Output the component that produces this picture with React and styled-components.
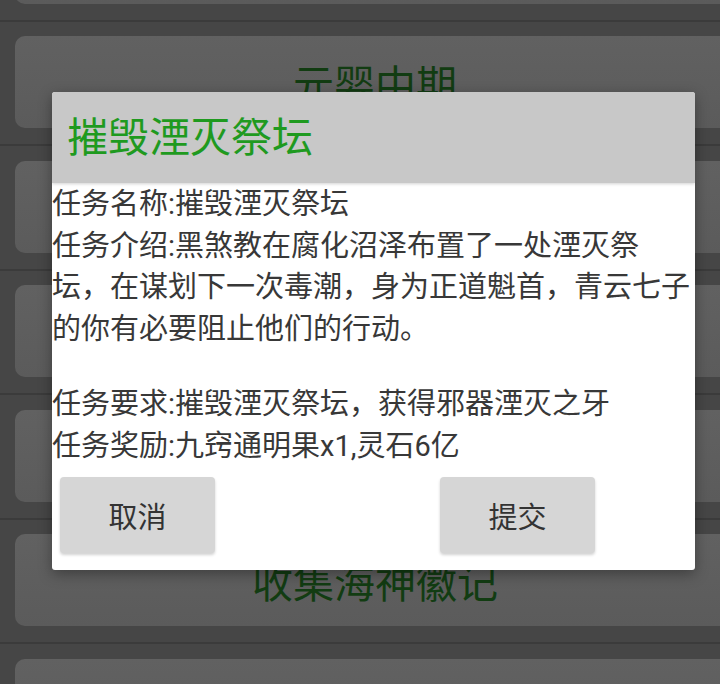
import React from "react";
import styled, { createGlobalStyle } from "styled-components";

const Global = createGlobalStyle`
  html, body {
    margin: 0;
    padding: 0;
    width: 720px;
    height: 684px;
    overflow: hidden;
    background: #464646;
    font-family: Roboto, "Noto Sans CJK SC", sans-serif;
  }
`;

const Screen = styled.div`
  position: relative;
  width: 720px;
  height: 684px;
  overflow: hidden;
  background: #464646;
`;

/* the quest list behind the dialog, scrolled part way down */
const List = styled.div`
  display: flex;
  flex-direction: column;
  margin-top: -88.5px;
`;

const Row = styled.div`
  display: flex;
  flex-direction: column;
  padding-left: 15px;
`;

const Card = styled.div`
  width: 720px;
  height: 92px;
  border-radius: 10px 0 0 10px;
  background: linear-gradient(180deg, #616161 0%, #5b5b5b 100%);
  display: flex;
  align-items: center;
  justify-content: center;
  font-size: 41px;
  color: #123c12;
  font-family: "Noto Sans CJK SC", sans-serif;
`;

const Divider = styled.div`
  margin: 16px 0 0 -15px;
  height: 2px;
  width: 735px;
  background: #3b3b3b;
  margin-bottom: 14.5px;
`;

const Scrim = styled.div`
  position: absolute;
  inset: 0;
  display: flex;
  align-items: flex-start;
  padding: 92px 0 0 52px;
`;

const Dialog = styled.div`
  width: 643px;
  height: 478px;
  background: #ffffff;
  border-radius: 3px;
  overflow: hidden;
  display: flex;
  flex-direction: column;
  box-shadow: 0 4px 14px rgba(0, 0, 0, 0.35);
`;

const TitleBar = styled.div`
  height: 91px;
  flex: none;
  background: #c8c8c8;
  display: flex;
  align-items: center;
  padding: 0 0 8px 15px;
  box-sizing: border-box;
  box-shadow: 0 1px 3px rgba(0, 0, 0, 0.18);
  position: relative;
  z-index: 1;
`;

const Title = styled.h1`
  margin: 0;
  font-weight: 400;
  font-size: 41px;
  color: #1f9a1f;
  font-family: "Noto Sans CJK SC", sans-serif;
`;

const Body = styled.div`
  display: flex;
  flex-direction: column;
  padding-top: 1px;
  flex: 1;
`;

const Para = styled.p`
  margin: 0 0 ${(p) => p.$after || 0}px 0;
  font-size: 29px;
  line-height: 41.5px;
  color: #383838;
  white-space: nowrap;
`;

const Buttons = styled.div`
  display: flex;
  gap: 225px;
  padding-left: 8px;
  margin-top: 10px;
`;

const Button = styled.button`
  width: 155px;
  height: 76px;
  border: none;
  border-radius: 4px;
  background: #d6d6d6;
  box-shadow: 0 2px 3px rgba(0, 0, 0, 0.18);
  font-family: "Noto Sans CJK SC", sans-serif;
  font-size: 29px;
  color: #333;
  padding: 0;
`;

const cards = ["", "元婴中期", "", "", "", "收集海神徽记", ""];

export default function App() {
  return (
    <>
      <Global />
      <Screen>
        <List>
          {cards.map((t, i) => (
            <Row key={i}>
              <Card>{t}</Card>
              <Divider />
            </Row>
          ))}
        </List>
        <Scrim>
          <Dialog>
            <TitleBar>
              <Title>摧毁湮灭祭坛</Title>
            </TitleBar>
            <Body>
              <Para $after={34}>
                任务名称:摧毁湮灭祭坛
                <br />
                任务介绍:黑煞教在腐化沼泽布置了一处湮灭祭
                <br />
                坛，在谋划下一次毒潮，身为正道魁首，青云七子
                <br />
                的你有必要阻止他们的行动。
              </Para>
              <Para>
                任务要求:摧毁湮灭祭坛，获得邪器湮灭之牙
                <br />
                任务奖励:九窍通明果x1,灵石6亿
              </Para>
              <Buttons>
                <Button>取消</Button>
                <Button>提交</Button>
              </Buttons>
            </Body>
          </Dialog>
        </Scrim>
      </Screen>
    </>
  );
}
